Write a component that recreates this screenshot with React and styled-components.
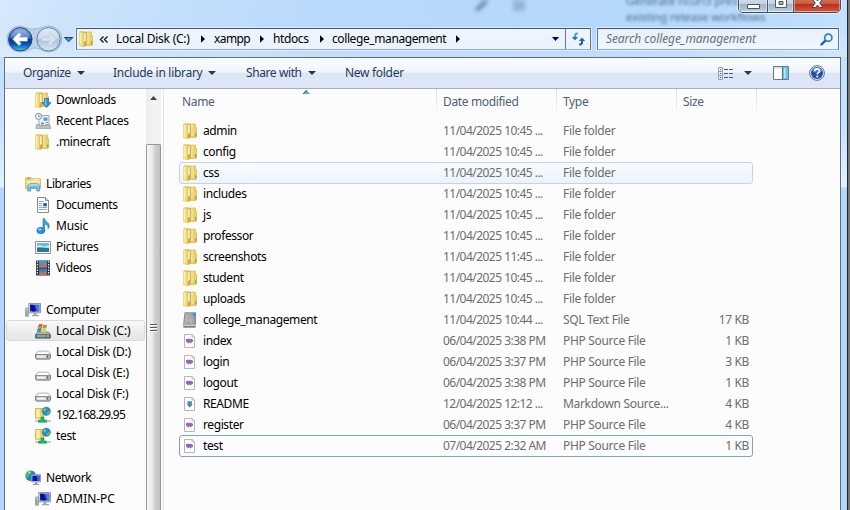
import React from "react";
import styled, { createGlobalStyle, css } from "styled-components";

const GlobalStyle = createGlobalStyle`
  * { box-sizing: border-box; }
  html, body { margin: 0; padding: 0; overflow: hidden; }
  body { font: 12px/20px "Noto Sans", "Open Sans", sans-serif; color: #000; }
  svg { display: block; flex: none; overflow: visible; }
`;

const Desktop = styled.div`
  width: 850px;
  height: 510px;
  display: flex;
  overflow: hidden;
  background: linear-gradient(90deg, #4c4c4c, #777);
`;

const Frame = styled.div`
  position: relative;
  width: 848px;
  height: 510px;
  flex: none;
  display: flex;
  flex-direction: column;
  padding: 0 6px 0 4px;
  border-right: 1px solid #1b2733;
  background: linear-gradient(180deg, #c4e0fd 57px, #c4e0fd 120px, #e5f1fd 187px, #b5d7fb 188px);
`;

const GlassTop = styled.div`
  position: absolute;
  left: 0;
  top: 0;
  width: 847px;
  height: 57px;
  background:
    linear-gradient(180deg, rgba(255,255,255,0) 55%, rgba(255,255,255,.18)),
    linear-gradient(112deg, #d6e8fd 0, #c7e0fc 115px, #b9d9fc 300px, #b4d7fc 600px, #bfddfc 760px, #cde4fd 847px);
`;

const Ghost = styled.div`
  position: absolute;
  left: 626px;
  top: -7px;
  color: #4e6d90;
  font-size: 11.6px;
  line-height: 16px;
  letter-spacing: -0.15px;
  white-space: pre;
  filter: blur(1.8px);
`;

const GhostMarks = styled.svg`
  position: absolute;
  left: 470px;
  top: 0;
  filter: blur(2px);
`;

const Caption = styled.div`
  position: absolute;
  left: 738px;
  top: -6px;
  display: flex;
  height: 19px;
  width: 103px;
  border: 1px solid #414c5b;
  border-radius: 0 0 5px 5px;
  overflow: hidden;
  box-shadow: 0 0 0 1px rgba(255,255,255,.55);
`;

const CaptionButton = styled.div`
  width: ${(p) => p.$w}px;
  display: flex;
  justify-content: center;
  padding-top: ${(p) => p.$drop}px;
  border-right: ${(p) => (p.$close ? 0 : 1)}px solid #4b5868;
  background: ${(p) =>
    p.$close
      ? "linear-gradient(180deg, #d5806e 0, #c65a45 9px, #b82f16 9px, #d0543a 16px, #e08a70)"
      : "linear-gradient(180deg, #dce6f2 0, #c3d0e0 9px, #9fb2c9 9px, #b4c5d9 15px, #d5e1ef)"};
  box-shadow: inset 0 0 0 1px rgba(255,255,255,.4);
`;

const NavBar = styled.div`
  position: relative;
  height: 57px;
  flex: none;
  display: flex;
  align-items: flex-start;
  padding: 25px 0 0 2px;
`;

const AddressBar = styled.div`
  display: flex;
  align-items: center;
  width: 515px;
  height: 22px;
  margin: 3px 0 0 2px;
  border: 1px solid #66788d;
  border-top-color: #4a5564;
  border-bottom-color: #98a9bc;
  background: linear-gradient(180deg, #edf4fd, #eaf3fd);
  box-shadow: 0 0 0 1px rgba(236,246,255,.65);
  padding-left: 2px;
`;

const Crumb = styled.span`
  width: ${(p) => p.$w}px;
  margin-left: ${(p) => p.$gap}px;
  letter-spacing: ${(p) => p.$ls}px;
  white-space: nowrap;
`;

const Laquo = styled.svg`margin-left: 7px;`;
const Chevron = styled.svg`margin-left: ${(p) => p.$gap}px;`;
const AddressDrop = styled.svg`margin-left: 92px;`;

const Refresh = styled.div`
  display: flex;
  align-items: center;
  justify-content: center;
  width: 25px;
  height: 20px;
  margin-left: auto;
  border-left: 1px solid #66788d;
`;

const SearchBox = styled.div`
  display: flex;
  align-items: center;
  justify-content: space-between;
  width: 242px;
  height: 22px;
  margin: 3px 0 0 6px;
  padding: 0 5px 0 8px;
  border: 1px solid #66788d;
  border-top-color: #4a5564;
  border-bottom-color: #98a9bc;
  background: linear-gradient(180deg, #e6f1fd, #eff6fe);
  box-shadow: 0 0 0 1px rgba(236,246,255,.65);
  color: #6d7277;
  font-style: italic;
  white-space: nowrap;
`;

const SearchText = styled.span`letter-spacing: -0.1px;`;

const Client = styled.div`
  position: relative;
  flex: 1;
  min-height: 0;
  display: flex;
  flex-direction: column;
  border: 1px solid #5b6f86;
  border-bottom: 0;
  background: #fcfcfc;
`;

const Toolbar = styled.div`
  display: flex;
  align-items: center;
  height: 31px;
  flex: none;
  padding: 0 15px 0 18px;
  border-bottom: 1px solid #a0afc9;
  background: linear-gradient(180deg, #fbfdff 0, #f0f5fc 14px, #dde7f4 15px, #dce6f4 100%);
  color: #1e395b;
`;

const Command = styled.div`
  display: flex;
  align-items: center;
  gap: 6px;
  width: ${(p) => p.$w}px;
  letter-spacing: ${(p) => p.$ls}px;
  white-space: nowrap;
`;

const ToolIcons = styled.div`
  display: flex;
  align-items: center;
  margin-left: auto;
`;

const ViewDrop = styled.svg`margin: 0 21px 0 11px;`;
const HelpIcon = styled.svg`margin-left: 20px;`;

const Body = styled.div`
  display: flex;
  flex: 1;
  min-height: 0;
`;

const NavPane = styled.div`
  width: 141px;
  flex: none;
  overflow: hidden;
`;

const NavItem = styled.div`
  display: flex;
  align-items: center;
  height: 21px;
  margin-left: 1px;
  width: 139px;
  padding-left: ${(p) => (p.$child ? 28 : 18)}px;
  gap: ${(p) => (p.$child ? 6 : 5)}px;
  border: 1px solid transparent;
  letter-spacing: ${(p) => p.$ls}px;
  white-space: nowrap;
  ${(p) =>
    p.$selected &&
    css`
      border-color: #d9d9d9;
      border-radius: 3px;
      background: linear-gradient(180deg, #f8f8f8, #e5e5e5);
    `}
`;

const NavGap = styled.div`height: 21px;`;

const ScrollBar = styled.div`
  width: 15px;
  flex: none;
  display: flex;
  flex-direction: column;
  background: linear-gradient(90deg, #ececec, #f3f3f3 50%, #f0f0f0);
`;

const ScrollUp = styled.div`
  display: flex;
  justify-content: center;
  height: 55px;
  padding-top: 7px;
`;

const Thumb = styled.div`
  flex: 1;
  display: flex;
  justify-content: center;
  padding-top: 179px;
  border: 1px solid #979797;
  border-bottom: 0;
  border-radius: 2px 2px 0 0;
  background: linear-gradient(90deg, #f6f6f6 0, #e9e9e9 45%, #d4d4d6 55%, #c0c0c5 100%);
`;

const Splitter = styled.div`
  width: 3px;
  flex: none;
  border-right: 1px solid #d6e5f5;
`;

const ListPane = styled.div`
  flex: 1;
  min-width: 0;
  padding-left: 15px;
`;

const Header = styled.div`
  position: relative;
  display: grid;
  grid-template-columns: 258px 120px 120px 80px;
  height: 31px;
  color: #4c607a;
  letter-spacing: -0.35px;
`;

const HeaderCell = styled.div`
  height: 24px;
  padding: 3px 0 0 ${(p) => (p.$first ? 3 : 6)}px;
  border-right: 1px solid;
  border-image: linear-gradient(180deg, #d2e3f5, #e3eef9 70%, #fcfcfc) 1;
`;

const SortMark = styled.svg`
  position: absolute;
  left: 124px;
  top: 1px;
`;

const Row = styled.div`
  display: grid;
  grid-template-columns: 20px 240px 120px 110px 1fr;
  align-items: center;
  width: 574px;
  height: 22px;
  margin-bottom: -1px;
  padding: 0 3px;
  border: 1px solid transparent;
  border-radius: 3px;
  color: #6d6d6d;
  white-space: nowrap;
  ${(p) =>
    p.$state === "hover" &&
    css`
      border-color: #b8d6fb;
      background: linear-gradient(180deg, #fafbfd, #ebf3fd);
    `}
  ${(p) =>
    p.$state === "focus" &&
    css`
      border-color: #7da2ce;
    `}
`;

const Cell = styled.span`
  letter-spacing: ${(p) => p.$ls}px;
  ${(p) => p.$name && "color: #000;"}
  ${(p) => p.$right && "text-align: right;"}
`;

function FolderShape() {
  return (
    <g>
      <path d="M.2 1.2 1.4.2H6l.9.6 5.4-.3.7.7v3h1v9.6l-1.5 1.2H7L5 16 .2 15Z" fill="#e3c65c" />
      <path d="M.5 1.2 4.4 1.8v13.6L.5 14.6Z" fill="#f0dd80" />
      <path d="M.8 1.8 2.2 2v11.8l-1.4-.4Z" fill="#faf0b0" />
      <path d="M4.4 1.8 7.8.9v13.4L4.8 15.8Z" fill="#d0ab45" />
      <path d="M4.8 2.6 6.8 1.8v7.4L4.8 11.5Z" fill="#f6eecb" />
      <path d="M7.8 1.2h4.8v13.4H7.8Z" fill="#e6cb64" />
      <path d="M8 1.6h2.6V13H8Z" fill="#f2df88" />
      <path d="M12.3 5h1.4v9l-1.4.6Z" fill="#dab646" />
      <path d="M12.4 5.6h.8v4h-.8Z" fill="#f7ebae" />
      <path d="M12.1 10.8h1v2h-1Z" fill="#4f9fa8" />
    </g>
  );
}

function Glyph({ kind, w = 16 }) {
  const shapes = {
    folder: <FolderShape />,
    downloads: (
      <g>
        <FolderShape />
        <path d="M9.5 6.5h4v4.2H16l-4.5 4.8-4.5-4.8h2.5Z" fill="#2d8fe0" stroke="#176bb4" strokeWidth=".7" />
        <path d="M10.2 7h1.2v7l-2.6-2.7h1.4Z" fill="#7bc4f4" />
      </g>
    ),
    recent: (
      <g>
        <path d="M4 2.5h10v10.5H4Z" fill="#eef3f8" stroke="#8796a4" strokeWidth=".8" />
        <path d="M8.5 4.5h4v3.2h-4ZM6 9.5h3v2H6Z" fill="#5f97c6" />
        <path d="M10.5 9.5h2.5M10.5 11.5h2.5" stroke="#8798a8" />
        <path d="M1.5 11.5H4.5v1.2h7v-1.2h3L16 15.5H.8Z" fill="#bcc0c3" stroke="#8d9297" strokeWidth=".6" />
        <circle cx="3.6" cy="3.4" r="3.1" fill="#edf4fa" stroke="#8a9199" />
        <path d="M3.6 1.5v2.2h1.7" fill="none" stroke="#5281ab" strokeWidth=".8" />
      </g>
    ),
    libraries: (
      <g>
        <path d="M.5 2.2 1 1.5h5l1 1.3h8.5v9.8H.5Z" fill="#eed980" stroke="#c8ab50" strokeWidth=".7" />
        <path d="M1.3 5.2h13.3v1.2H1.3Z" fill="#fff6c7" />
        <path d="M2.2 2.6h3" stroke="#67b74e" />
        <path d="M7.5 3.8h6.5" stroke="#fff4b8" />
        <path d="M2.7 15V10.2L5 7.8h7.5l2 2.4V15h-2.7v-3H5.5v3Z" fill="#7cc2ea" stroke="#4b94c5" strokeWidth=".8" />
        <path d="M4 10 5.4 8.8h6.8l.9 1.2" stroke="#d0effd" fill="none" />
      </g>
    ),
    document: (
      <g>
        <path d="M2.5.5h8l3 3v12h-11Z" fill="#fff" stroke="#848c94" />
        <path d="M10.5.5v3h3" fill="#dce4eb" stroke="#848c94" />
        <path d="M4 4.5h5M4 6.5h3M4 8.5h3M4 10.5h8M4 12.5h8" stroke="#9da6bd" />
        <path d="M8 6h4v3.5H8Z" fill="#3f9bd5" /><path d="M9.3 6.7h2v2h-2Z" fill="#183f83" />
      </g>
    ),
    music: (
      <g>
        <ellipse cx="5.8" cy="12.5" rx="4" ry="3.2" fill="#2e91dc" stroke="#1b65a9" strokeWidth=".6" />
        <path d="M8 12.8V.6l1.5-.2c.2 3 4.8 3.6 4.8 7.4 0 1.5-.7 2.5-1.4 3.2.8-2.7-.4-4.2-3.2-5v7Z" fill="#3d9ddd" stroke="#1c6bae" strokeWidth=".5" />
        <ellipse cx="4.8" cy="11.4" rx="1.8" ry="1.1" fill="#88d1f7" />
      </g>
    ),
    picture: (
      <g>
        <path d="M.5 2.5h15v12H.5Z" fill="#fff" stroke="#8d9399" />
        <path d="M2 4h12v9H2Z" fill="#68bce9" />
        <path d="M2 7.2c3-2 4 0 7 .3 2 .2 3-.8 5-1v2H2Z" fill="#d5f1ed" />
        <path d="M2 8.7c5-.8 7 .6 12 .2V11H2Z" fill="#277e6b" />
        <path d="M2 10.8h12V13H2Z" fill="#2579b4" />
      </g>
    ),
    video: (
      <g>
        <path d="M1 .5h14v15H1Z" fill="#24333d" />
        <path d="M4 1h8v6.5H4Z" fill="#3c9bda" /><path d="M4 8.5h8V15H4Z" fill="#2b83c8" />
        <path d="M4.2 7.4 5.8 3l2 2L10 2.4l1.6 5ZM4.2 15 6 10.5l2 2 2.2-2.4 1.4 4.9Z" fill="#cf6c41" />
        <path d="M2.4 1.3v14M13.6 1.3v14" stroke="#dfe9ee" strokeWidth="1.3" strokeDasharray="1.5 1.2" />
      </g>
    ),
    computer: (
      <g>
        <path d="M3.8 1.5h11.7v9.3H3.8Z" fill="#dae1e8" stroke="#8a98aa" />
        <path d="M5 2.7h9.3v6.8H5Z" fill="#1721ad" />
        <path d="M10 2.7h4.3v6.8H12Z" fill="#4f7de5" />
        <path d="M5 2.7h3l2 6.8H7.5Z" fill="#08107d" />
        <path d="M8.5 11h3v2h2.5v1.2H7V13h1.5Z" fill="#9ca8b3" />
        <path d="M.5 6.5 1 6h2l.5.7v7.6h-3Z" fill="#c1c8ce" stroke="#858e97" strokeWidth=".7" />
        <path d="M1.3 8.5h1v5h-1Z" fill="#45b14d" />
      </g>
    ),
    disk: (
      <g>
        <path d="M.5 10.2 3 7.2h10l2.5 3v4l-1 .8h-13l-1-.8Z" fill="#e4e5e7" stroke="#94979b" strokeWidth=".8" />
        <path d="m1.4 10 2-2.2h9.2l2 2.2Z" fill="#fcfcfd" />
        <path d="M.6 10.6h14.8v3.6l-1 .8H1.6l-1-.8Z" fill="#b8bbc0" stroke="#73777d" strokeWidth=".8" />
        <path d="M2 11.4h8.5v2.4H2Z" fill="#eeeeef" />
        <path d="M12 11.2h1.4v2.6H12Z" fill="#289037" /><path d="M13 11.2h.6v2.6H13Z" fill="#a7e86c" />
      </g>
    ),
    system: (
      <g>
        <path d="m.5 12 2-3h11l2 3v3H.5Z" fill="#b5bdc3" stroke="#69767d" strokeWidth=".8" />
        <path d="M.7 11.3h14.6v3.8H.7Z" fill="#60777f" stroke="#526269" strokeWidth=".6" />
        <path d="M2 12h8.5v2H2Z" fill="#8ba2aa" /><path d="M12 12h1.6v2H12Z" fill="#62e252" />
        <path d="M3.8 1.4C5.5.2 6.6.8 7.7 1.3L6.8 5C5.4 4.4 4.4 4.3 2.8 5.1Z" fill="#ed5b2a" />
        <path d="M8.2 1.5c1.4.8 2.7.8 4 0L11.3 5c-1.4.8-2.5.8-4 .1Z" fill="#77b739" />
        <path d="M2.7 5.6c1.6-.8 2.6-.6 4-.1l-.9 3.6c-1.4-.5-2.6-.7-4 0Z" fill="#318fcf" />
        <path d="M7.2 5.7c1.4.7 2.5.7 4 0l-.9 3.5c-1.4.8-2.6.7-4 0Z" fill="#f4c52e" />
      </g>
    ),
    netdrive: (
      <g>
        <path d="M.5 1.5h8v9.7h-8Z" fill="#ebcf68" stroke="#cba947" strokeWidth=".8" />
        <path d="M1.2 2.2h3.5v8.2H1.2Z" fill="#fbef9c" />
        <circle cx="11.3" cy="4.3" r="4.2" fill="#2687d6" stroke="#477ca4" strokeWidth=".5" />
        <path d="M9 1.5c2-1.5 3 .2 2 1.8L9 5ZM11.7 5l3-1.2c.2 2.4-1 4-2.5 4.3Z" fill="#5bc353" />
        <path d="m8.3 2.7 2-.8-1.2 2.2Z" fill="#b9e6fa" />
        <path d="M0 14h16" stroke="#b8c8bd" strokeWidth="1.7" />
        <path d="M6 10h3v3h2.5v2.3h-8V13H6Z" fill="#21b568" stroke="#17854a" strokeWidth=".5" />
      </g>
    ),
    network: (
      <g>
        <circle cx="5.7" cy="5.7" r="5.3" fill="#2180cd" />
        <path d="M2.2 2c2.8-2.5 5-.8 4.1 1L4.2 5 3 8 .7 6.5C.2 4.6 1.1 2.8 2.2 2Z" fill="#46c263" />
        <path d="M3.4 2.2 6 1.4 4.4 4Z" fill="#c1f1db" />
        <path d="M6.4 4.7h9.1v7.2H6.4Z" fill="#dbe3e9" stroke="#7b8d9f" strokeWidth=".8" />
        <path d="M7.3 5.6h7.3V11H7.3Z" fill="#0c18a1" /><path d="M11.5 5.6h3.1V11h-2Z" fill="#386add" />
        <path d="M10 12.2h2.2v1.6h2v1.3H8v-1.3h2Z" fill="#899daf" />
      </g>
    ),
    sql: (
      <g>
        <path d="M1.5.2H13v12l-.6 3.2H.4L.2 12Z" fill="#898b8e" />
        <path d="M2 .6h9.4v11.6H1Z" fill="#a4a6a7" />
        <path d="M.4 12.6h12.3v1.6H.4Z" fill="#d0d1d2" /><path d="M.4 14.2h12v1.2H.4Z" fill="#737678" />
        <path d="M3.5 11V3.5c3 1 4.5 3.4 5 7.5M3.5 7.7c2 0 3.5.8 5 3" fill="none" stroke="#c8c9ca" strokeWidth=".8" />
        <path d="M9.8 1h3.2v3H9.8Z" fill="#3e8eea" />
      </g>
    ),
    php: (
      <g>
        <path d="M1.5 1.5h7.8l2.2 2.2v10.8h-10Z" fill="#fdfdfd" stroke="#b5b8bb" />
        <path d="M9 1.5V4h2.5" fill="#e3e4e6" stroke="#b5b8bb" strokeWidth=".8" />
        <path d="M3 6.4c.5-.8 1.8-.9 2.6-.3.8-.7 3-.6 4 .3.6.6.5 1.8.1 2.7l-.9-.3-.5 1.5H7.1l-.4-1.1-1.1 1.1H4.4L4.2 9l-1.2-.2Z" fill="#9068b5" />
      </g>
    ),
    markdown: (
      <g>
        <path d="M1.5 1.5h7.8l2.2 2.2v10.8h-10Z" fill="#fdfdfd" stroke="#b5b8bb" />
        <path d="M9 1.5V4h2.5" fill="#e3e4e6" stroke="#b5b8bb" strokeWidth=".8" />
        <path d="m4.5 5 1.3.6.9-.6.9.6 1.3-.6v3.4h.8l-3 3-3-3h.8Z" fill="#468eac" />
      </g>
    ),
  };
  return <svg width={w} height="16" viewBox={`0 0 ${w} 16`}>{shapes[kind]}</svg>;
}

const DownArrow = () => (
  <svg width="8" height="4" viewBox="0 0 8 4"><path d="M0 0h8L4 4Z" fill="#1e395b" /></svg>
);

const Chev = ({ gap }) => (
  <Chevron $gap={gap} width="4" height="8" viewBox="0 0 4 8"><path d="M0 .3 4 4 0 7.7Z" fill="#000" /></Chevron>
);

const BackForward = () => (
  <svg width="68" height="28" viewBox="0 0 68 28">
    <defs>
      <linearGradient id="back" x2="0" y2="1">
        <stop stopColor="#8cb2e1" /><stop offset=".46" stopColor="#2d63b5" />
        <stop offset=".5" stopColor="#073889" /><stop offset=".7" stopColor="#0950af" /><stop offset="1" stopColor="#38c6f8" />
      </linearGradient>
      <linearGradient id="forward" x2="0" y2="1">
        <stop stopColor="#e4edf7" /><stop offset=".48" stopColor="#c9d8e8" />
        <stop offset=".52" stopColor="#adc2da" /><stop offset="1" stopColor="#d3e6f9" />
      </linearGradient>
    </defs>
    <path d="M14 1C18 1 20 4 27 4S38 1 43 1a13 13 0 0 1 0 26c-6 0-9-4-14-4s-8 4-15 4A13 13 0 0 1 14 1Z" fill="#a6bed9" fillOpacity=".55" stroke="#8199b7" strokeOpacity=".5" />
    <circle cx="14.3" cy="14.3" r="11.7" fill="url(#back)" stroke="#25456f" />
    <path d="M5 11.5a10 10 0 0 1 18.7 0c-6 2-13 2-18.7 0Z" fill="#fff" opacity=".2" />
    <path d="m6.8 14.3 6.2-6.2 2.1 2-2.4 2.4h8.6v3.6h-8.6l2.4 2.4-2.1 2Z" fill="#fff" stroke="#d9edff" strokeWidth=".6" />
    <circle cx="42.5" cy="14.3" r="11.7" fill="url(#forward)" stroke="#6c809b" />
    <path d="m50 14.3-6.2-6.2-2.1 2 2.4 2.4h-8.6v3.6h8.6l-2.4 2.4 2.1 2Z" fill="#d8e4f0" stroke="#b4c8dd" strokeWidth=".7" />
    <path d="M58.5 12.5h8.3l-4.1 4.3Z" fill="#3895cf" stroke="#17466f" />
  </svg>
);

const NAV = [
  { icon: "downloads", label: "Downloads", child: true },
  { icon: "recent", label: "Recent Places", child: true },
  { icon: "folder", label: ".minecraft", child: true },
  null,
  { icon: "libraries", label: "Libraries", ls: -0.4 },
  { icon: "document", label: "Documents", child: true },
  { icon: "music", label: "Music", child: true, ls: -0.15 },
  { icon: "picture", label: "Pictures", child: true },
  { icon: "video", label: "Videos", child: true },
  null,
  { icon: "computer", label: "Computer" },
  { icon: "system", label: "Local Disk (C:)", child: true, selected: true, ls: -0.2 },
  { icon: "disk", label: "Local Disk (D:)", child: true, ls: -0.25 },
  { icon: "disk", label: "Local Disk (E:)", child: true, ls: -0.25 },
  { icon: "disk", label: "Local Disk (F:)", child: true, ls: -0.25 },
  { icon: "netdrive", label: "192.168.29.95", child: true, ls: -0.7 },
  { icon: "netdrive", label: "test", child: true },
  null,
  { icon: "network", label: "Network", ls: -0.45 },
  { icon: "computer", label: "ADMIN-PC", child: true, ls: -0.05 },
];

const folder = (name, date = "11/04/2025 10:45 ...", state) => ({ icon: "folder", name, date, type: "File folder", state });
const php = (name, date, size, state) => ({ icon: "php", name, date, type: "PHP Source File", size, state });

const FILES = [
  folder("admin"),
  folder("config"),
  folder("css", undefined, "hover"),
  folder("includes"),
  folder("js"),
  folder("professor"),
  folder("screenshots", "11/04/2025 11:45 ..."),
  folder("student"),
  folder("uploads"),
  { icon: "sql", name: "college_management", date: "11/04/2025 10:44 ...", type: "SQL Text File", size: "17 KB" },
  php("index", "06/04/2025 3:38 PM", "1 KB"),
  php("login", "06/04/2025 3:37 PM", "3 KB"),
  php("logout", "06/04/2025 3:38 PM", "1 KB"),
  { icon: "markdown", name: "README", date: "12/04/2025 12:12 ...", type: "Markdown Source...", size: "4 KB" },
  php("register", "06/04/2025 3:37 PM", "4 KB"),
  php("test", "07/04/2025 2:32 AM", "1 KB", "focus"),
];

export default function App() {
  return (
    <Desktop>
      <GlobalStyle />
      <Frame>
        <GlassTop />
        <GhostMarks width="60" height="14">
          <path d="m5 9 10-10 3 3L8 12Z" fill="#45627e" opacity=".7" />
          <path d="M43 0h12v11H43Z" fill="#6d8cad" opacity=".45" />
        </GhostMarks>
        <Ghost>{"Generate ncurl3 press\nexisting release workflows"}</Ghost>
        <Caption>
          <CaptionButton $w={29} $drop={-1}>
            <svg width="13" height="14"><path d="M.5 9.5h12v4H.5Z" fill="#fff" stroke="#4d5866" /></svg>
          </CaptionButton>
          <CaptionButton $w={26} $drop={0}>
            <svg width="12" height="14"><path d="M.5 3.5h11v9H.5Z" fill="#fff" stroke="#4d5866" /><path d="M4 6.5h4v3H4Z" fill="#a8b9cc" stroke="#4d5866" /></svg>
          </CaptionButton>
          <CaptionButton $w={46} $close $drop={0}>
            <svg width="13" height="14"><path d="M1 3.5h3.5l2 2.5 2-2.5H12L8.7 8l3.3 4.5H8.5l-2-2.5-2 2.5H1L4.3 8Z" fill="#fff" stroke="#59414a" /></svg>
          </CaptionButton>
        </Caption>

        <NavBar>
          <BackForward />
          <AddressBar>
            <Glyph kind="folder" w={14} />
            <Laquo width="8" height="7" viewBox="0 0 8 7"><path d="m3.5.5-3 3 3 3m4-6-3 3 3 3" fill="none" stroke="#111" strokeWidth="1.3" /></Laquo>
            <Crumb $gap={8} $w={76} $ls={-0.25}>Local Disk (C:)</Crumb>
            <Chev gap={9} />
            <Crumb $gap={9} $w={36} $ls={-0.6}>xampp</Crumb>
            <Chev gap={10} />
            <Crumb $gap={9} $w={36} $ls={-0.4}>htdocs</Crumb>
            <Chev gap={11} />
            <Crumb $gap={8} $w={114} $ls={-0.4}>college_management</Crumb>
            <Chev gap={10} />
            <AddressDrop width="7" height="4" viewBox="0 0 7 4"><path d="M0 0h7L3.5 4Z" fill="#00006b" /></AddressDrop>
            <Refresh>
              <svg width="15" height="14" viewBox="0 0 15 14">
                <path d="M6.8 1.5C4.5 1.3 4 2.5 4 5" fill="none" stroke="#4797db" strokeWidth="2" />
                <path d="M.8 5h6.4L4 8.5Z" fill="#2b78c5" />
                <path d="M8.2 12.5c2.4.2 2.9-1 2.9-3.5" fill="none" stroke="#214c9c" strokeWidth="2" />
                <path d="M7.8 9h6.4L11 5.4Z" fill="#2b66b7" />
              </svg>
            </Refresh>
          </AddressBar>
          <SearchBox>
            <SearchText>Search college_management</SearchText>
            <svg width="13" height="13" viewBox="0 0 13 13">
              <path d="m1.5 11.5 4-4" stroke="#2259a5" strokeWidth="2.4" strokeLinecap="round" />
              <circle cx="8.3" cy="4.7" r="3.6" fill="#e9f6ff" stroke="#3979c4" strokeWidth="1.7" />
            </svg>
          </SearchBox>
        </NavBar>

        <Client>
          <Toolbar>
            <Command $w={90} $ls={-0.45}>Organize <DownArrow /></Command>
            <Command $w={133} $ls={-0.3}>Include in library <DownArrow /></Command>
            <Command $w={99} $ls={-0.4}>Share with <DownArrow /></Command>
            <Command $w={80} $ls={-0.3}>New folder</Command>
            <ToolIcons>
              <svg width="15" height="13" viewBox="0 0 15 13">
                <path d="M.5.5h4v12h-4ZM.5 4.5h4M.5 8.5h4" fill="#fff" stroke="#92a0b3" />
                <path d="M1.8 1.8h1.5v1.5H1.8Z" fill="#4b9962" /><path d="M1.8 5.8h1.5v1.5H1.8Z" fill="#e53232" /><path d="M1.8 9.8h1.5v1.5H1.8Z" fill="#3261c7" />
                <path d="M6 2.5h4m1 0h4M6 6.5h4m1 0h4M6 10.5h4m1 0h4" stroke="#405b7b" />
              </svg>
              <ViewDrop width="8" height="4" viewBox="0 0 8 4"><path d="M0 0h8L4 4Z" fill="#1e395b" /></ViewDrop>
              <svg width="16" height="14" viewBox="0 0 16 14">
                <path d="M.5.5h15v13H.5Z" fill="#fff" stroke="#617a96" /><path d="M1 2h14" stroke="#b5c8d8" />
                <path d="M9.5 1h5.5v12H9.5Z" fill="#76c2db" /><path d="M9.5 1v12" stroke="#52718e" /><path d="M11 2h1.5v10H11Z" fill="#b9e7f1" />
              </svg>
              <HelpIcon width="16" height="16" viewBox="0 0 16 16">
                <circle cx="8" cy="8" r="7.4" fill="#dce2ec" stroke="#6c7787" />
                <circle cx="8" cy="8" r="6" fill="#244cb4" /><path d="M2.7 6a5.7 5.7 0 0 1 10.6 0C10 8 6 8 2.7 6Z" fill="#7297dc" opacity=".65" />
                <path d="M5.6 6.3C5.6 3 10.6 3.1 10.6 6c0 1.7-2.3 1.7-2.3 3.5" fill="none" stroke="#fff" strokeWidth="1.7" />
                <path d="M7.3 10.7h2v1.7h-2Z" fill="#fff" />
              </HelpIcon>
            </ToolIcons>
          </Toolbar>

          <Body>
            <NavPane>
              {NAV.map((n, i) =>
                n ? (
                  <NavItem key={i} $child={n.child} $selected={n.selected} $ls={n.ls ?? -0.33}>
                    <Glyph kind={n.icon} w={n.child ? 15 : 16} />
                    {n.label}
                  </NavItem>
                ) : (
                  <NavGap key={i} />
                )
              )}
            </NavPane>
            <ScrollBar>
              <ScrollUp>
                <svg width="7" height="4" viewBox="0 0 7 4"><path d="M3.5 0 7 4H0Z" fill="#404040" /></svg>
              </ScrollUp>
              <Thumb>
                <svg width="7" height="8" viewBox="0 0 7 8"><path d="M0 .5h7M0 3.5h7M0 6.5h7" stroke="#555" /><path d="M0 1.5h7M0 4.5h7M0 7.5h7" stroke="#fff" /></svg>
              </Thumb>
            </ScrollBar>
            <Splitter />
            <ListPane>
              <Header>
                <HeaderCell $first>Name</HeaderCell>
                <HeaderCell>Date modified</HeaderCell>
                <HeaderCell>Type</HeaderCell>
                <HeaderCell>Size</HeaderCell>
                <SortMark width="7" height="4" viewBox="0 0 7 4"><path d="M3.5 0 7 4H0Z" fill="#6ba0c4" /><path d="M3.5 0 0 4" stroke="#3c5e72" /></SortMark>
              </Header>
              {FILES.map((f) => (
                <Row key={f.name} $state={f.state}>
                  <Glyph kind={f.icon} w={14} />
                  <Cell $name $ls={-0.4}>{f.name}</Cell>
                  <Cell $ls={-0.53}>{f.date}</Cell>
                  <Cell $ls={-0.32}>{f.type}</Cell>
                  <Cell $right $ls={-0.35}>{f.size}</Cell>
                </Row>
              ))}
            </ListPane>
          </Body>
        </Client>
      </Frame>
    </Desktop>
  );
}
